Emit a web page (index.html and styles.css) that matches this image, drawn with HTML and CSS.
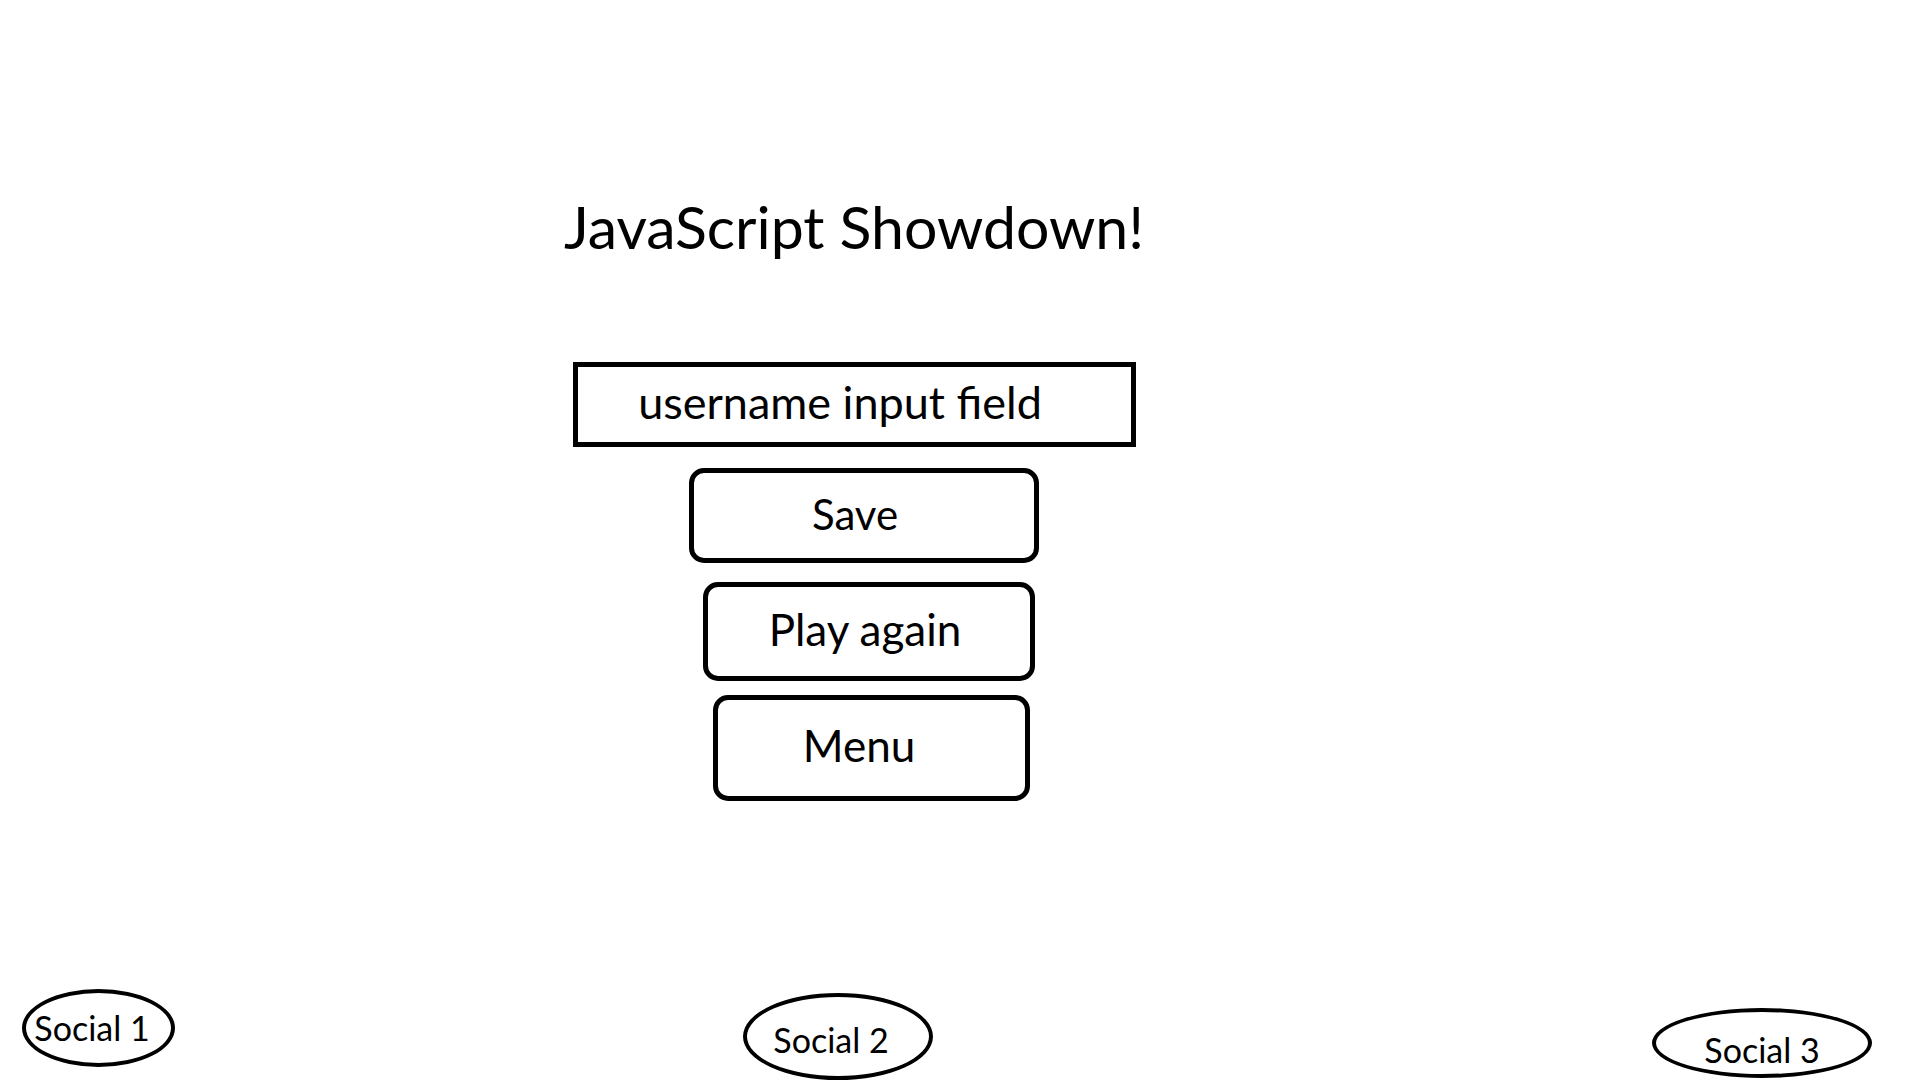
FILE: index.html
```html
<!DOCTYPE html>
<html lang="en">
<head>
<meta charset="utf-8">
<title>JavaScript Showdown!</title>
<link rel="stylesheet" href="styles.css">
</head>
<body>
<div class="screen">
  <main class="main">
    <h1 class="title">JavaScript Showdown!</h1>
    <div class="field">username input field</div>
    <button class="btn btn-save">Save</button>
    <button class="btn btn-play">Play again</button>
    <button class="btn btn-menu">Menu</button>
  </main>
  <footer class="socials">
    <a class="social social-1">Social 1</a>
    <a class="social social-2">Social 2</a>
    <a class="social social-3">Social 3</a>
  </footer>
</div>
</body>
</html>
```
FILE: styles.css
```css
html, body {
  margin: 0;
  padding: 0;
  background: #ffffff;
}
body {
  font-family: Lato, "Open Sans", sans-serif;
  color: #000;
}
.screen {
  width: 1920px;
  height: 1080px;
  display: flex;
  flex-direction: column;
  overflow: hidden;
}
.main {
  display: flex;
  flex-direction: column;
  align-items: flex-start;
  padding-top: 197px;
}
.title {
  margin: 0 0 0 564px;
  font-size: 59px;
  font-weight: 400;
  line-height: 59px;
  height: 59px;
  white-space: nowrap;
}
.field {
  box-sizing: border-box;
  margin: 106px 0 0 573px;
  width: 563px;
  height: 85px;
  border: 5px solid #000;
  display: flex;
  align-items: center;
  justify-content: center;
  padding: 0 29px 5px 0;
  font-size: 45px;
}
.btn {
  box-sizing: border-box;
  border: 5px solid #000;
  border-radius: 15px;
  background: #fff;
  font-family: inherit;
  color: #000;
  display: flex;
  align-items: center;
  justify-content: center;
  padding: 0;
}
.btn-save {
  margin: 21px 0 0 689px;
  width: 350px;
  height: 95px;
  padding: 0 18px 3px 0;
  font-size: 42px;
}
.btn-play {
  margin: 19px 0 0 703px;
  width: 332px;
  height: 99px;
  padding: 0 8px 5px 0;
  font-size: 44px;
}
.btn-menu {
  margin: 14px 0 0 713px;
  width: 317px;
  height: 106px;
  padding: 0 25px 6px 0;
  font-size: 44px;
}
.socials {
  margin-top: auto;
  display: flex;
  align-items: flex-start;
  height: 91px;
}
.social {
  box-sizing: border-box;
  border: 4px solid #000;
  border-radius: 50%;
  display: flex;
  align-items: center;
  justify-content: center;
  font-size: 34px;
  color: #000;
  flex: none;
  white-space: nowrap;
}
.social-1 {
  margin-left: 22px;
  width: 153px;
  height: 78px;
  padding: 0 13px 2px 0;
}
.social-2 {
  margin: 4px 0 0 568px;
  width: 190px;
  height: 87px;
  padding: 6px 14px 0 0;
}
.social-3 {
  margin: 19px 0 0 719px;
  width: 220px;
  height: 70px;
  padding-top: 13px;
}
```
